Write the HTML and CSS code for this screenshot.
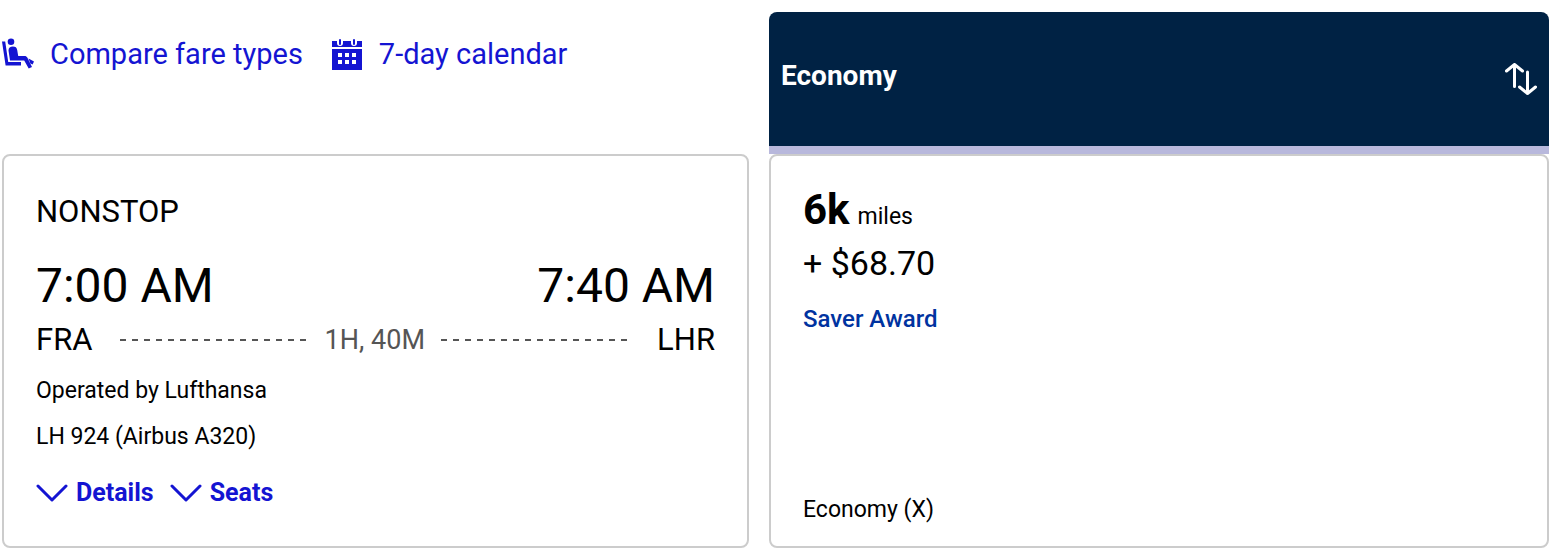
FILE: index.html
```html
<!DOCTYPE html>
<html lang="en">
<head>
    <meta charset="UTF-8">
    <meta name="viewport" content="width=device-width, initial-scale=1.0">
    <title>Flight results</title>
    <link rel="stylesheet" href="styles.css">
</head>
<body>
    <main class="results">
        <nav class="tools">
            <a href="#fares">
                <svg class="icon" viewBox="0 0 32 32" fill="currentColor" aria-hidden="true">
                    <circle cx="9" cy="3.800" r="3.300"/>
                    <path d="M0 3.500h3.200l3 20.500H19v3.500H3.600z"/>
                    <path d="M6.500 12.500c0-2.700 1.700-4 4.300-4 2.700 0 4 1.200 4.400 3.400l1 6h6.300c1.500 0 2.200.5 2.800 1.600L30 29l-3.300 1.600-4.500-8H8z"/>
                    <path d="M26.500 20.500l5.500 3-1.400 3-2.200-1z"/>
                </svg>
                Compare fare types
            </a>
            <a href="#calendar">
                <svg class="icon" viewBox="0 0 32 32" aria-hidden="true">
                    <path fill="currentColor" d="M1 3h30v6H1zM1 11h30v21H1z"/>
                    <path fill="#fff" d="M6 1h6v4a3 3 0 0 1-6 0zM20 1h6v4a3 3 0 0 1-6 0z"/>
                    <path stroke="currentColor" stroke-width="2" stroke-linecap="round" d="M9 2v4M23 2v4"/>
                    <path fill="#fff" d="M7 15h4v4H7zM14 15h4v4h-4zM21 15h4v4h-4zM7 22h4v4H7zM14 22h4v4h-4zM21 22h4v4h-4z"/>
                </svg>
                7-day calendar
            </a>
        </nav>

        <div class="cabin">
            <h2>Economy</h2>
            <button type="button" class="sort" aria-label="Sort by Economy">
                <svg viewBox="0 0 32 32" aria-hidden="true">
                    <path d="M9.500 23.500V1.500M1.500 8l8-6.500 8 6.500M22.500 9v21.500M14.500 24l8 6.500 8-6.500"/>
                </svg>
            </button>
        </div>

        <section class="card flight">
            <p class="stops">NONSTOP</p>
            <div class="times">
                <span>7:00 AM</span>
                <span>7:40 AM</span>
            </div>
            <div class="route">
                <span>FRA</span>
                <span class="dash"></span>
                <span class="duration">1H, 40M</span>
                <span class="dash"></span>
                <span>LHR</span>
            </div>
            <p class="info">Operated by Lufthansa</p>
            <p class="info">LH 924 (Airbus A320)</p>
            <div class="toggles">
                <button type="button">
                    <svg viewBox="0 0 32 18" aria-hidden="true"><path d="M2 2l14 14L30 2"/></svg>
                    Details
                </button>
                <button type="button">
                    <svg viewBox="0 0 32 18" aria-hidden="true"><path d="M2 2l14 14L30 2"/></svg>
                    Seats
                </button>
            </div>
        </section>

        <section class="card fare">
            <p class="miles"><strong>6k</strong> miles</p>
            <p class="price">+ $68.70</p>
            <p class="award">Saver Award</p>
            <p class="class">Economy (X)</p>
        </section>
    </main>
</body>
</html>
```
FILE: styles.css
```css
* {
    box-sizing: border-box;
}

body {
    margin: 0;
    background-color: #fff;
    color: #000;
    font-family: Roboto, Arial, sans-serif;
    font-size: 24px;
}

h2, p {
    margin: 0;
}

button {
    background: none;
    border: none;
    padding: 0;
    font: inherit;
    cursor: pointer;
}

.results {
    display: grid;
    grid-template-columns: 747fr 780fr;
    column-gap: 20px;
    padding: 12px 7px 6px 2px;
}

.tools {
    display: flex;
    align-items: flex-start;
    gap: 28px;
    padding-top: 26px;
}

.tools a {
    display: flex;
    align-items: center;
    gap: 16px;
    color: #1414d2;
    font-size: 29px;
    line-height: 32px;
    text-decoration: none;
}

.icon {
    width: 32px;
    height: 32px;
}

.cabin {
    display: flex;
    justify-content: space-between;
    align-items: center;
    height: 142px;
    padding: 0 12px;
    background-color: #002244;
    border-bottom: 8px solid #b8b8dc;
    border-radius: 8px 8px 0 0;
    color: #fff;
}

.cabin h2 {
    padding-bottom: 8px;
    font-size: 28px;
    font-weight: 700;
}

.sort svg {
    display: block;
    width: 32px;
    height: 32px;
    fill: none;
    stroke: #fff;
    stroke-width: 3;
    stroke-linecap: round;
    stroke-linejoin: round;
}

.card {
    border: 2px solid #ccc;
    border-radius: 8px;
    padding: 32px;
}

.stops {
    padding-top: 4px;
    font-size: 31px;
    line-height: 40px;
}

.times {
    display: flex;
    justify-content: space-between;
    margin-top: 24px;
    font-size: 48px;
    line-height: 60px;
}

.route {
    display: flex;
    align-items: center;
    font-size: 31px;
    line-height: 48px;
}

.dash {
    flex: 1;
    height: 2px;
    margin: 0 16px;
    background: repeating-linear-gradient(to right, #555 0 6px, transparent 6px 12px);
}

.dash:nth-child(2) {
    margin-left: 28px;
}

.dash:nth-child(4) {
    margin-right: 28px;
}

.duration {
    color: #555;
    font-size: 27px;
}

.info {
    margin-bottom: 14px;
    font-size: 23px;
    line-height: 32px;
}

.route + .info {
    margin-top: 11px;
}

.toggles {
    display: flex;
    gap: 16px;
    margin-top: 24px;
    padding-bottom: 5px;
}

.toggles button {
    display: flex;
    align-items: center;
    gap: 8px;
    color: #1414d2;
    font-size: 25px;
    font-weight: 700;
    line-height: 32px;
}

.toggles svg {
    width: 32px;
    height: 18px;
    fill: none;
    stroke: currentColor;
    stroke-width: 3;
    stroke-linecap: round;
    stroke-linejoin: round;
}

.fare {
    display: flex;
    flex-direction: column;
    padding-bottom: 20px;
}

.miles {
    display: flex;
    align-items: baseline;
    gap: 8px;
    font-size: 23px;
    line-height: 44px;
}

.miles strong {
    font-size: 42px;
}

.price {
    font-size: 34px;
    line-height: 48px;
}

.award {
    margin-top: 16px;
    color: #0033a0;
    font-weight: 500;
    line-height: 32px;
}

.class {
    margin-top: auto;
    font-size: 23px;
    line-height: 32px;
}
```
